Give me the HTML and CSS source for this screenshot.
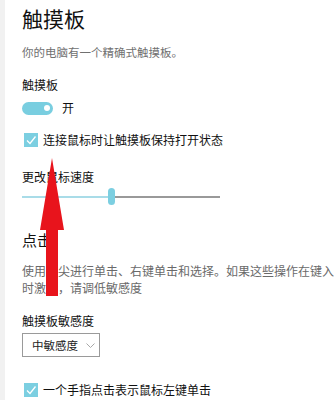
FILE: index.html
```html
<!DOCTYPE html>
<html lang="zh-CN">
<head>
<meta charset="utf-8">
<link rel="stylesheet" href="styles.css">
</head>
<body>
<div class="page">
  <div class="strip"></div>
  <main class="main">
    <h1 class="title">触摸板</h1>
    <p class="sub">你的电脑有一个精确式触摸板。</p>
    <div class="label l1">触摸板</div>
    <div class="toggle-row">
      <span class="toggle"><span class="knob"></span></span>
      <span class="tlabel">开</span>
    </div>
    <div class="check-row c1">
      <span class="box"><svg width="14" height="14" viewBox="0 0 14 14"><polyline points="3,7.5 6,10.5 11.5,3.5" fill="none" stroke="#fff" stroke-width="1.3"/></svg></span>
      <span class="ctext">连接鼠标时让触摸板保持打开状态</span>
    </div>
    <div class="label l2">更改鼠标速度</div>
    <div class="slider">
      <span class="fill"></span>
      <span class="thumb"></span>
      <span class="rest"></span>
    </div>
    <h2 class="heading">点击</h2>
    <p class="desc">使用指尖进行单击、右键单击和选择。如果这些操作在键入时激活，请调低敏感度</p>
    <div class="label l3">触摸板敏感度</div>
    <div class="select">
      <span class="stext">中敏感度</span>
      <svg class="chev" width="9" height="5" viewBox="0 0 9 5"><polyline points="0.5,0.5 4.5,4.5 8.5,0.5" fill="none" stroke="#a8a8a8" stroke-width="1"/></svg>
    </div>
    <div class="check-row c2">
      <span class="box"><svg width="14" height="14" viewBox="0 0 14 14"><polyline points="3,7.5 6,10.5 11.5,3.5" fill="none" stroke="#fff" stroke-width="1.3"/></svg></span>
      <span class="ctext">一个手指点击表示鼠标左键单击</span>
    </div>
  </main>
  <svg class="arrow" width="24" height="138" viewBox="0 0 24 138"><polygon points="12,0 24,72 18,72 18,138 6,138 6,72 0,72" fill="#e8141c"/></svg>
</div>
</body>
</html>
```

FILE: styles.css
```css
* { box-sizing: border-box; }
html, body { margin: 0; padding: 0; background: #fff; }
body {
  font-family: "Noto Sans CJK SC", "Noto Sans", sans-serif;
  color: #111;
  width: 336px;
  height: 400px;
  overflow: hidden;
}
.page {
  position: relative;
  display: flex;
  height: 400px;
}
.strip {
  width: 5px;
  flex: none;
  background: #f1f1f1;
}
.main {
  flex: 1;
  padding-left: 17px;
  display: flex;
  flex-direction: column;
  align-items: flex-start;
}
.title {
  margin: 3px 0 0;
  font-size: 21px;
  line-height: 30px;
  font-weight: 400;
  color: #111;
}
.sub {
  margin: 11px 0 0;
  font-size: 11.5px;
  line-height: 16px;
  color: #707070;
}
.label {
  font-size: 12px;
  line-height: 16px;
  color: #111;
}
.l1 { margin-top: 17px; }
.toggle-row {
  margin-top: 7px;
  height: 16px;
  display: flex;
  align-items: center;
  gap: 9px;
}
.toggle {
  width: 31px;
  height: 13px;
  border-radius: 7px;
  background: #79cee0;
  display: flex;
  align-items: center;
  justify-content: flex-end;
  padding-right: 3px;
}
.knob {
  width: 6px;
  height: 6px;
  border-radius: 50%;
  background: #fff;
}
.tlabel {
  font-size: 12px;
  line-height: 16px;
}
.check-row {
  height: 16px;
  display: flex;
  align-items: center;
  gap: 5px;
  padding-left: 2px;
}
.c1 { margin-top: 16px; }
.c2 { margin-top: 25px; }
.box {
  width: 14px;
  height: 14px;
  background: #7ccfe1;
  display: block;
}
.box svg { display: block; }
.ctext {
  font-size: 12px;
  line-height: 16px;
  color: #111;
}
.l2 { margin-top: 21px; }
.slider {
  margin-top: 3px;
  width: 198px;
  height: 17px;
  display: flex;
  align-items: center;
}
.fill {
  width: 86px;
  height: 2px;
  background: #a9dce8;
}
.thumb {
  width: 7px;
  height: 17px;
  border-radius: 3.5px;
  background: #7ccfe1;
}
.rest {
  flex: 1;
  height: 2px;
  background: #999;
}
.heading {
  margin: 25px 0 0;
  font-size: 15px;
  line-height: 20px;
  font-weight: 400;
  color: #111;
}
.desc {
  margin: 12px 0 0;
  width: 318px;
  font-size: 12px;
  letter-spacing: 0;
  line-height: 17px;
  color: #6a6a6a;
}
.l3 { margin-top: 17px; }
.select {
  margin-top: 4px;
  width: 78px;
  height: 24px;
  border: 1px solid #9a9a9a;
  display: flex;
  align-items: center;
  padding-left: 9px;
}
.stext {
  font-size: 11.5px;
  line-height: 16px;
  color: #222;
}
.chev {
  margin-left: 8px;
}
.arrow {
  position: absolute;
  left: 40px;
  top: 158px;
}
```
